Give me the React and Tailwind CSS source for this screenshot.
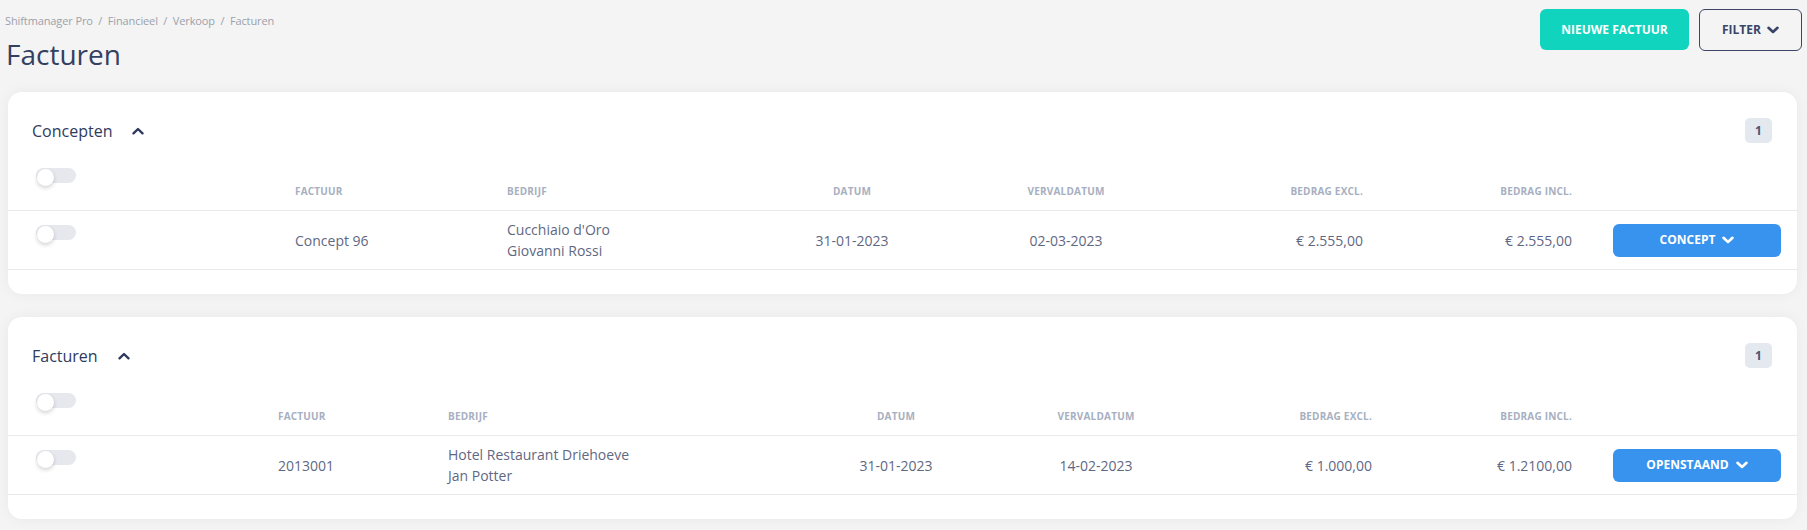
import React from "react";

const font = { fontFamily: "'Open Sans', 'Liberation Sans', sans-serif" };

function ChevronDown({ className }) {
  return (
    <svg viewBox="0 0 12 8" className={className} fill="none" stroke="currentColor" strokeWidth="2.6" strokeLinecap="round" strokeLinejoin="round">
      <polyline points="1.5,1.8 6,6 10.5,1.8" />
    </svg>
  );
}

function ChevronUp({ className }) {
  return (
    <svg viewBox="0 0 12 8" className={className} fill="none" stroke="currentColor" strokeWidth="2.4" strokeLinecap="round" strokeLinejoin="round">
      <polyline points="1.5,6.3 6,2 10.5,6.3" />
    </svg>
  );
}

function Toggle() {
  return (
    <div className="relative w-[40px] h-[15px] rounded-full bg-[#e6e8ee]">
      <div className="absolute left-[1px] top-[1px] w-[17px] h-[17px] rounded-full bg-white shadow-[0_2px_4px_rgba(0,0,0,0.18)]" />
    </div>
  );
}

function Card({ title, cols, row }) {
  const label = "text-[10px] font-bold uppercase tracking-[0.02em] text-[#a7afc1] leading-[14px]";
  const cell = "text-[14px] leading-[21px] text-[#5f6883]";
  return (
    <div className="bg-white rounded-[14px] shadow-[0_0_14px_rgba(0,0,0,0.05)] pt-[26px] pb-[24px]">
      <div className="flex items-center justify-between pl-[24px] pr-[25px] h-[25px]">
        <div className="flex items-center gap-[20px]">
          <span className="text-[16px] text-[#2f3a5c]">{title}</span>
          <ChevronUp className="w-[12px] h-[8px] text-[#2f3a5c]" />
        </div>
        <div className="w-[27px] h-[25px] rounded-[5px] bg-[#e4e8ef] flex items-center justify-center text-[12px] font-bold text-[#4a5578]">1</div>
      </div>
      <div className={`grid ${cols} h-[68px] border-b border-[#e9eaee]`}>
        <div className="pl-[28px] pt-[25px]"><Toggle /></div>
        <div className={`pt-[41px] ${label}`}>Factuur</div>
        <div className={`pt-[41px] ${label}`}>Bedrijf</div>
        <div className={`pt-[41px] text-center ${label}`}>Datum</div>
        <div className={`pt-[41px] text-center ${label}`}>Vervaldatum</div>
        <div className={`pt-[41px] text-right ${label}`}>Bedrag excl.</div>
        <div className={`pt-[41px] text-right ${label}`}>Bedrag incl.</div>
        <div />
      </div>
      <div className={`grid ${cols} h-[59px] border-b border-[#e9eaee] items-center`}>
        <div className="pl-[28px] self-start pt-[14px]"><Toggle /></div>
        <div className={cell}>{row.nr}</div>
        <div className={cell}>
          <div>{row.company}</div>
          <div>{row.person}</div>
        </div>
        <div className={`${cell} text-center`}>{row.date}</div>
        <div className={`${cell} text-center`}>{row.due}</div>
        <div className={`${cell} text-right`}>{row.excl}</div>
        <div className={`${cell} text-right`}>{row.incl}</div>
        <div className="flex justify-end pr-[16px]">
          <button className="w-[168px] h-[33px] rounded-[6px] bg-[#3793ee] text-white text-[12px] font-bold uppercase flex items-center justify-center gap-[7px]">
            {row.status}
            <ChevronDown className="w-[12px] h-[8px]" />
          </button>
        </div>
      </div>
    </div>
  );
}

export default function App() {
  return (
    <div className="min-h-[530px] bg-[#f4f4f4]" style={font}>
      <div className="flex justify-between items-start pl-[5px] pr-[5px]">
        <div className="pt-[14px]">
          <div className="text-[11px] leading-[14px] text-[#9ca1ab] tracking-[-0.01em]">
            Shiftmanager Pro&nbsp; / &nbsp;Financieel&nbsp; / &nbsp;Verkoop&nbsp; / &nbsp;Facturen
          </div>
          <h1 className="text-[28px] leading-[36px] mt-[8px] text-[#34405f] ml-[1px]">Facturen</h1>
        </div>
        <div className="flex gap-[10px] pt-[9px]">
          <button className="w-[149px] h-[41px] rounded-[6px] bg-[#10d4bd] text-white text-[12px] font-bold uppercase">Nieuwe factuur</button>
          <button className="w-[103px] h-[42px] rounded-[6px] border border-[#3c4566] text-[#3a4466] text-[12px] font-bold uppercase flex items-center justify-center gap-[6px]">
            Filter
            <ChevronDown className="w-[12px] h-[8px]" />
          </button>
        </div>
      </div>
      <div className="flex flex-col gap-[23px] pl-[8px] pr-[10px] pt-[20px] pb-[10px]">
        <Card
          title="Concepten"
          cols="grid-cols-[287px_212px_265px_160px_268px_163px_209px_1fr]"
          row={{ nr: "Concept 96", company: "Cucchiaio d'Oro", person: "Giovanni Rossi", date: "31-01-2023", due: "02-03-2023", excl: "€ 2.555,00", incl: "€ 2.555,00", status: "Concept" }}
        />
        <Card
          title="Facturen"
          cols="grid-cols-[270px_170px_368px_160px_240px_156px_200px_1fr]"
          row={{ nr: "2013001", company: "Hotel Restaurant Driehoeve", person: "Jan Potter", date: "31-01-2023", due: "14-02-2023", excl: "€ 1.000,00", incl: "€ 1.2100,00", status: "Openstaand" }}
        />
      </div>
    </div>
  );
}
